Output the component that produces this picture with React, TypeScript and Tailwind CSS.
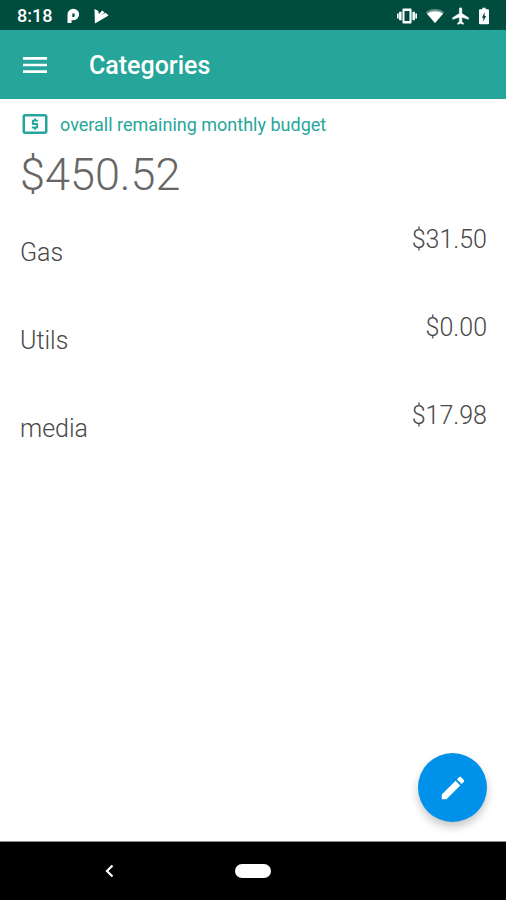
import React from 'react';

interface Category {
  id: string;
  name: string;
  remaining: number;
}

const categories: Category[] = [
  { id: 'gas', name: 'Gas', remaining: 31.5 },
  { id: 'utils', name: 'Utils', remaining: 0 },
  { id: 'media', name: 'media', remaining: 17.98 },
];

const OVERALL_REMAINING = 450.52;

const formatMoney = (amount: number) => `$${amount.toFixed(2)}`;

const StatusBar: React.FC = () => (
  <div className="flex h-[30px] items-center justify-between bg-[#004d40] pt-px pr-3 pl-[17px] text-white">
    <div className="flex items-center gap-[13px]">
      <span className="text-[18px] leading-[20px] font-medium">8:18</span>
      <div className="flex items-center gap-3">
        {/* P notification */}
        <svg className="h-4 w-4" viewBox="0 0 16 16" fill="currentColor">
          <path
            fillRule="evenodd"
            d="M2.500 15V6.500A5.800 5.800 0 1 1 8.500 12.300H6.500V15zM7.300 5.500v3.500h1.400c.6 0 .9-.3.9-.9V5.500z"
          />
        </svg>
        {/* play store check */}
        <svg className="h-4 w-4" viewBox="0 0 16 16" fill="currentColor">
          <path d="M1.500 1 5 2.700 6 6 9.200 2.600 11.600 4.400 8.600 7 12.600 4.800 15.600 7.600 1.900 15.400z" />
        </svg>
      </div>
    </div>
    <div className="flex items-center">
      <svg className="mr-2 h-5 w-5" viewBox="0 0 24 24" fill="currentColor">
        <path d="M0 15h2V9H0v6zM2.500 17h3V7h-3v10zM22 9v6h2V9h-2zM18.500 17h3V7h-3v10zM16 3H8c-.83 0-1.500.67-1.500 1.500v15c0 .83.67 1.500 1.500 1.500h8c.83 0 1.500-.67 1.500-1.500v-15c0-.83-.67-1.500-1.500-1.500zM15 18H9V6h6v12z" />
      </svg>
      <svg className="mr-[6px] h-5 w-5" viewBox="0 0 20 20" fill="currentColor">
        <path opacity="0.4" d="M10 17 .8 6.300C3.500 4.200 6.600 3 10 3s6.500 1.200 9.200 3.300z" />
        <path d="M10 17 2 7.700C4.400 6 7 5.200 10 5.200s5.600.8 8 2.500z" />
      </svg>
      <svg className="mr-[3px] h-5 w-5" viewBox="0 0 24 24" fill="currentColor" stroke="currentColor" strokeWidth="0.6">
        <path d="M21 16v-2l-8-5V3.500c0-.83-.67-1.500-1.500-1.500S10 2.670 10 3.500V9l-8 5v2l8-2.500V19l-2 1.500V22l3.500-1 3.500 1v-1.500L13 19v-5.500l8 2.500z" />
      </svg>
      <svg className="h-5 w-5" viewBox="0 0 24 24" fill="currentColor">
        <path d="M16.500 4H14V2h-4v2H7.500C6.700 4 6 4.600 6 5.330v15.330C6 21.400 6.700 22 7.500 22h9c.8 0 1.500-.6 1.500-1.330V5.330C18 4.600 17.300 4 16.500 4zM11.200 18.500v-4.500H9.500l3.300-6.500V12h1.700z" />
      </svg>
    </div>
  </div>
);

const AppBar: React.FC = () => (
  <header className="flex h-[69px] items-center gap-[38px] bg-[#26a69a] pl-[19px] text-white">
    <button type="button" aria-label="Open menu">
      <svg className="h-8 w-8" viewBox="0 0 24 24" fill="currentColor">
        <path d="M3 18h18v-2H3v2zm0-5h18v-2H3v2zm0-7v2h18V6H3z" />
      </svg>
    </button>
    <h1 className="pt-[2px] text-[25px] leading-[30px] font-medium">Categories</h1>
  </header>
);

const BudgetSummary: React.FC<{ amount: number }> = ({ amount }) => (
  <section className="px-5 pt-[10px]">
    <div className="flex items-start gap-[10px] text-[#26a69a]">
      <svg className="h-[30px] w-[30px]" viewBox="0 0 24 24" fill="currentColor">
        <path d="M11.200 16.500h1.600v-1h.7c.55 0 1-.45 1-1v-2.300c0-.55-.45-1-1-1h-2.400v-1.200h3.400V8.500h-1.700v-1h-1.600v1h-.7c-.55 0-1 .45-1 1v2.300c0 .55.45 1 1 1h2.400V14H9.500v1.500h1.700v1zM20 4H4c-1.110 0-1.990.89-1.990 2L2 18c0 1.110.89 2 2 2h16c1.110 0 2-.89 2-2V6c0-1.110-.89-2-2-2zm0 14H4V6h16v12z" />
      </svg>
      <h2 className="text-[18px] leading-[32px]">overall remaining monthly budget</h2>
    </div>
    <p className="mt-[6px] text-[45px] leading-[56px] font-light text-[#666666]">{formatMoney(amount)}</p>
  </section>
);

const CategoryRow: React.FC<{ category: Category }> = ({ category }) => (
  <li className="flex h-[88px] items-start justify-between pr-[19px] pl-5 text-[25px] leading-[30px] font-light text-[#484848]">
    <span className="pt-[13px]">{category.name}</span>
    <span>{formatMoney(category.remaining)}</span>
  </li>
);

const NavigationBar: React.FC = () => (
  <nav className="grid h-[59px] grid-cols-3 items-center justify-items-center border-t border-[#8a8a8a] bg-black px-[37px] text-white">
    <button type="button" aria-label="Back">
      <svg className="h-4 w-4" viewBox="0 0 16 16" fill="none" stroke="currentColor" strokeWidth="2.2">
        <path d="M11.500 2.500 6 8l5.500 5.500" />
      </svg>
    </button>
    <button type="button" aria-label="Home" className="h-[14px] w-9 rounded-full bg-white" />
  </nav>
);

export default function App() {
  return (
    <div className="flex min-h-screen flex-col bg-white font-['Roboto',sans-serif]">
      <StatusBar />
      <AppBar />
      <main className="relative flex-1">
        <BudgetSummary amount={OVERALL_REMAINING} />
        <ul className="mt-[22px]">
          {categories.map((category) => (
            <CategoryRow key={category.id} category={category} />
          ))}
        </ul>
        <button
          type="button"
          aria-label="Edit categories"
          className="absolute right-[19px] bottom-[19px] flex h-[69px] w-[69px] items-center justify-center rounded-full bg-[#0091ea] text-white shadow-[0_5px_9px_rgba(0,0,0,0.22)]"
        >
          <svg className="h-[30px] w-[30px]" viewBox="0 0 24 24" fill="currentColor">
            <path d="M3 17.250V21h3.750L17.810 9.940l-3.750-3.750L3 17.250zM20.710 7.040c.39-.39.39-1.020 0-1.410l-2.340-2.340c-.39-.39-1.020-.39-1.410 0l-1.830 1.830 3.750 3.750 1.830-1.830z" />
          </svg>
        </button>
      </main>
      <NavigationBar />
    </div>
  );
}
